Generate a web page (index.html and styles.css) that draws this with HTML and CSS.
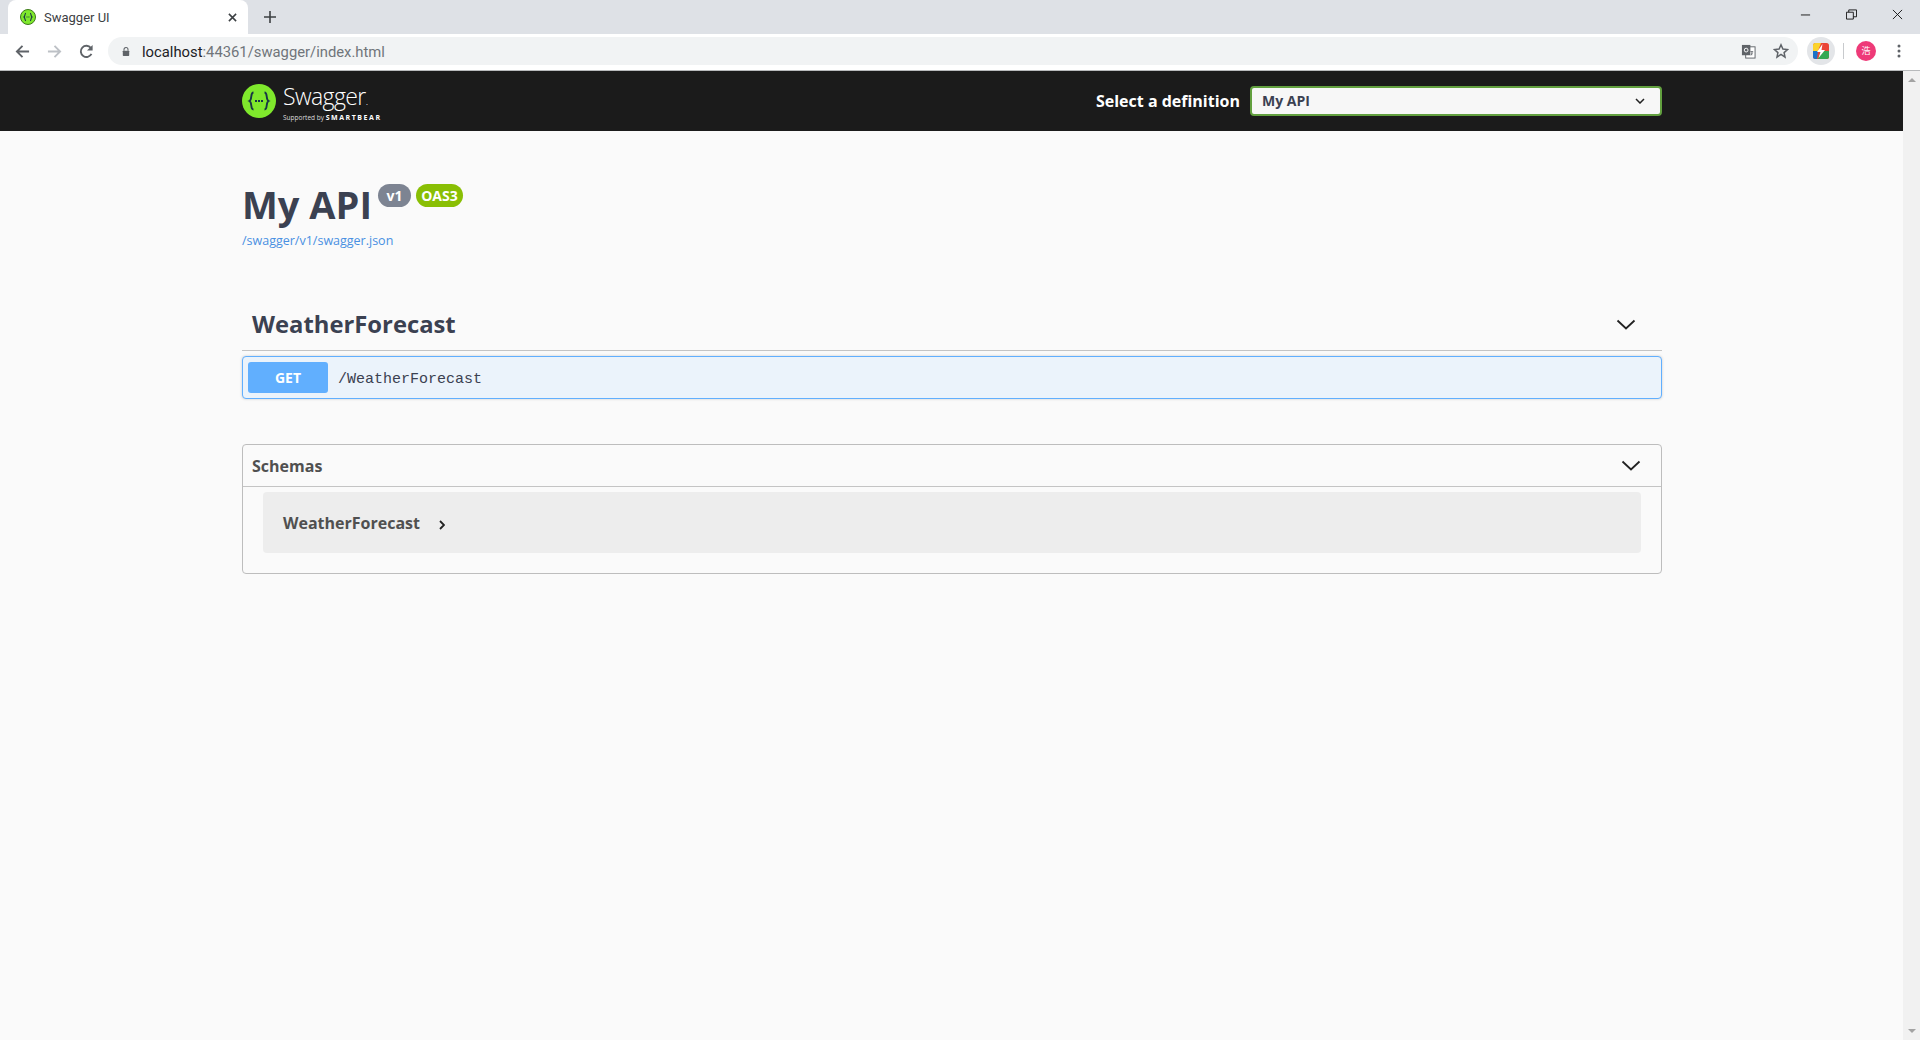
FILE: index.html
```html
<!DOCTYPE html>
<html lang="en">
<head>
<meta charset="utf-8">
<title>Swagger UI</title>
<link rel="stylesheet" href="styles.css">
</head>
<body>
<header class="chrome">
  <div class="tabstrip">
    <div class="tab">
      <svg class="favicon" viewBox="0 0 16 16"><circle cx="8" cy="8" r="7.5" fill="#7fe82c" stroke="#3d7a1a" stroke-width="1"/><path d="M6 4.2C4.6 4.2 5.2 7.4 4 8c1.2.6.6 3.8 2 3.8M10 4.2c1.4 0 .8 3.2 2 3.8-1.2.6-.6 3.8-2 3.8" fill="none" stroke="#173646" stroke-width="1.1"/><path d="M6.5 8h3" stroke="#173646" stroke-width="1" stroke-dasharray="1 .9"/></svg>
      <span class="tab-title">Swagger UI</span>
      <svg class="tab-close" viewBox="0 0 10 10"><path d="M1 1l8 8M9 1l-8 8" stroke="#3c4043" stroke-width="1.7"/></svg>
    </div>
    <svg class="newtab" viewBox="0 0 12 12"><path d="M6 0v12M0 6h12" stroke="#3c4043" stroke-width="1.6"/></svg>
    <div class="winctl">
      <svg viewBox="0 0 12 12"><path d="M1 6.5h10" stroke="#111" stroke-width="1"/></svg>
      <svg viewBox="0 0 12 12"><path d="M.5 3.5h7.5v7.5H.5zM3 3.5V1h8.500v7.500H8" fill="none" stroke="#111" stroke-width="1"/></svg>
      <svg viewBox="0 0 12 12"><path d="M1 1l10 10M11 1L1 11" stroke="#111" stroke-width="1"/></svg>
    </div>
  </div>
  <div class="toolbar">
    <div class="navs">
      <svg viewBox="0 0 16 16"><path d="M15 8H2.500M8 2L2 8l6 6" fill="none" stroke="#5f6368" stroke-width="2"/></svg>
      <svg viewBox="0 0 16 16"><path d="M1 8h12.500M8 2l6 6-6 6" fill="none" stroke="#bdc1c6" stroke-width="2"/></svg>
      <svg viewBox="0 0 16 16"><path d="M13.300 10.500A6 6 0 1 1 12.600 4.100" fill="none" stroke="#5f6368" stroke-width="2"/><path d="M14.500 1v6h-6z" fill="#5f6368"/></svg>
    </div>
    <div class="omnibox">
      <svg class="lock" viewBox="0 0 10 12"><path d="M2.500 5V3.500a2.500 2.500 0 0 1 5 0V5" fill="none" stroke="#5f6368" stroke-width="1.300"/><rect x="1" y="5" width="8" height="6.500" rx=".8" fill="#5f6368"/></svg>
      <span class="url"><span class="host">localhost</span>:44361/swagger/index.html</span>
      <svg class="translate" viewBox="0 0 16 16"><rect x="5" y="3" width="10" height="12" fill="#fff" stroke="#5f6368"/><rect x="1" y="1" width="9" height="11" fill="#5f6368"/><circle cx="5.500" cy="6.500" r="2" fill="none" stroke="#fff"/><path d="M10 8h3M11.500 8v4M10.500 12l2-3" stroke="#5f6368" stroke-width=".8" fill="none"/></svg>
      <svg class="star" viewBox="0 0 16 16"><path d="M8 1.800l1.900 4.200 4.600.5-3.400 3.100.9 4.500L8 11.400l-4 2.700.9-4.500L1.500 6.500l4.600-.5z" fill="none" stroke="#5f6368" stroke-width="1.500"/></svg>
    </div>
    <div class="ext">
      <svg viewBox="0 0 16 16"><rect width="16" height="16" rx="2.500" fill="#ea4335"/><path d="M0 8V2.500A2.500 2.500 0 0 1 2.500 0H8L5 8z" fill="#fbd32c"/><path d="M0 8h5l-1 8H2.500A2.500 2.500 0 0 1 0 13.500z" fill="#1a73c8"/><path d="M8 8h8v5.500a2.500 2.500 0 0 1-2.500 2.500H5z" fill="#34a853"/><path d="M9.500 1L4 9h3.500L5.500 15 12 7H8.500z" fill="#fff"/></svg>
    </div>
    <div class="sep"></div>
    <div class="avatar">浩</div>
    <svg class="menu" viewBox="0 0 4 14"><circle cx="2" cy="2" r="1.500" fill="#5f6368"/><circle cx="2" cy="7" r="1.500" fill="#5f6368"/><circle cx="2" cy="12" r="1.500" fill="#5f6368"/></svg>
  </div>
</header>

<div class="viewport">
  <div class="page">
    <div class="topbar">
      <div class="wrapper topbar-inner">
        <div class="logo">
          <svg class="logo-mark" viewBox="0 0 34 34"><circle cx="17" cy="17" r="17" fill="#7fe82c"/><path d="M11.500 8.500C8 8.500 10.500 15.500 7.500 17c3 1.500.5 8.500 4 8.500M22.500 8.500c3.500 0 1 7 4 8.500-3 1.500-.5 8.500-4 8.500" fill="none" stroke="#173646" stroke-width="1.900"/><path d="M13 17h8" stroke="#173646" stroke-width="2" stroke-dasharray="2 1"/></svg>
          <div class="logo-text">
            <span class="logo-name">Swagger<small>.</small></span>
            <span class="logo-sub">Supported by <b>SMARTBEAR</b></span>
          </div>
        </div>
        <div class="definition">
          <span class="definition-label">Select a definition</span>
          <div class="select">
            <span>My API</span>
            <svg viewBox="0 0 10 6"><path d="M1 1l4 4 4-4" fill="none" stroke="#222" stroke-width="1.500"/></svg>
          </div>
        </div>
      </div>
    </div>

    <main class="wrapper">
      <section class="info">
        <h1 class="title">My API<span class="badges"><span class="badge badge-version">v1</span><span class="badge badge-oas">OAS3</span></span></h1>
        <a class="spec-link" href="#">/swagger/v1/swagger.json</a>
      </section>

      <section class="tag">
        <div class="tag-head">
          <h3>WeatherForecast</h3>
          <svg class="chev" viewBox="0 0 20 11"><path d="M1.500 1.500L10 9.500l8.500-8" fill="none" stroke="#222" stroke-width="1.800"/></svg>
        </div>
        <div class="opblock">
          <span class="method">GET</span>
          <span class="path">/WeatherForecast</span>
        </div>
      </section>

      <section class="models">
        <div class="models-head">
          <h4>Schemas</h4>
          <svg class="chev" viewBox="0 0 20 11"><path d="M1.500 1.500L10 9.500l8.500-8" fill="none" stroke="#222" stroke-width="1.800"/></svg>
        </div>
        <div class="models-body">
          <div class="model">
            <span class="model-name">WeatherForecast</span>
            <svg class="model-arrow" viewBox="0 0 6 10"><path d="M1 1l4 4-4 4" fill="none" stroke="#222" stroke-width="1.800"/></svg>
          </div>
        </div>
      </section>
    </main>
  </div>
  <div class="scrollbar">
    <span class="sb-up"></span>
    <span class="sb-down"></span>
  </div>
</div>
</body>
</html>
```

FILE: styles.css
```css
* { box-sizing: border-box; }
html, body { margin: 0; height: 1040px; overflow: hidden; }
body { display: flex; flex-direction: column; background: #fafafa; font-family: "Open Sans", "Noto Sans", sans-serif; color: #3b4151; }
svg { display: block; flex: none; }

.chrome { flex: none; height: 71px; background: #fff; border-bottom: 1px solid #b8babc; }
.tabstrip { height: 34px; background: #dee1e6; display: flex; align-items: center; padding-left: 8px; }
.tab { width: 240px; height: 34px; background: #fff; border-radius: 8px 8px 0 0; display: flex; align-items: center; padding: 0 11px 0 12px; }
.favicon { width: 16px; height: 16px; }
.tab-title { margin-left: 8px; flex: 1; font: 13px Roboto, sans-serif; color: #3c4043; }
.tab-close { width: 9px; height: 9px; }
.newtab { width: 12px; height: 12px; margin-left: 16px; }
.winctl { margin-left: auto; margin-right: 17px; margin-top: -6px; display: flex; gap: 35px; }
.winctl svg { width: 11px; height: 11px; }

.toolbar { height: 36px; display: flex; align-items: center; padding: 0 0 2px 15px; }
.navs { display: flex; gap: 17px; width: 93px; }
.navs svg { width: 15px; height: 15px; }
.omnibox { width: 1690px; height: 28px; border-radius: 14px; background: #f1f3f4; display: flex; align-items: center; padding: 0 9px 0 14px; }
.lock { width: 8px; height: 11px; }
.url { margin-left: 12px; padding-top: 1px; flex: 1; font: 14.8px Roboto, sans-serif; color: #70757a; }
.host { color: #202124; }
.translate { width: 15px; height: 15px; margin-right: 17px; }
.star { width: 16px; height: 16px; }
.ext { width: 28px; height: 28px; margin-left: 9px; border-radius: 50%; background: #e3e5e8; display: flex; align-items: center; justify-content: center; }
.ext svg { width: 16px; height: 16px; }
.sep { width: 1px; height: 16px; background: #c8cacd; margin-left: 8px; }
.avatar { width: 20px; height: 20px; margin-left: 12px; border-radius: 50%; background: #ee3a78; color: #fff; font: 9px/20px "Noto Sans CJK SC", sans-serif; text-align: center; }
.menu { width: 4px; height: 14px; margin-left: 21px; }

.viewport { flex: 1; min-height: 0; display: flex; }
.page { flex: 1; min-width: 0; }
.wrapper { width: 1420px; margin-left: 242px; }

.topbar { height: 60px; background: #1b1b1b; }
.topbar-inner { height: 60px; display: flex; align-items: center; justify-content: space-between; }
.logo { display: flex; align-items: center; gap: 7px; }
.logo-mark { width: 34px; height: 34px; }
.logo-text { display: flex; flex-direction: column; color: #fff; padding-top: 2px; }
.logo-name { font-size: 23px; font-weight: 300; line-height: 26px; letter-spacing: -.6px; }
.logo-name small { font-size: 10px; }
.logo-sub { font-size: 6.5px; line-height: 8px; color: #ddd; }
.logo-sub b { font-size: 7px; letter-spacing: 1.55px; color: #fff; }
.definition { display: flex; align-items: center; gap: 10px; }
.definition-label { font-size: 16px; font-weight: 700; line-height: 24px; color: #fff; }
.select { width: 412px; height: 30px; border: 2px solid #62a03f; border-radius: 4px; background: #f7f7f7; display: flex; align-items: center; justify-content: space-between; padding: 0 15px 2px 10px; font-size: 14px; font-weight: 700; color: #3b4151; }
.select svg { width: 10px; height: 6px; margin-top: 2px; }

.info { padding-top: 49px; height: 164px; }
.title { margin: 0; display: flex; align-items: flex-start; font-size: 38px; font-weight: 700; line-height: 48px; }
.badges { display: flex; gap: 5px; margin: 4px 0 0 6px; }
.badge { height: 23px; border-radius: 12px; padding: 0 5px; font-size: 14px; font-weight: 700; line-height: 23px; color: #fff; }
.badge-version { width: 33px; text-align: center; background: #7d8492; }
.badge-oas { width: 47px; text-align: center; background: #89bf04; padding: 0; }
.spec-link { display: block; margin-top: 5px; font-size: 12.5px; line-height: 16px; color: #4990e2; text-decoration: none; }

.tag-head { height: 56px; border-bottom: 1px solid #c4c4c4; display: flex; align-items: center; justify-content: space-between; padding: 3px 26px 0 10px; }
.tag-head h3 { margin: 0; font-size: 23.8px; font-weight: 700; line-height: 32px; }
.chev { width: 20px; height: 11px; }
.opblock { height: 43px; margin-top: 5px; border: 1px solid #61affe; border-radius: 4px; background: #ebf3fb; display: flex; align-items: center; padding-left: 5px; box-shadow: 0 0 3px rgba(0,0,0,.19); }
.method { width: 80px; height: 31px; border-radius: 3px; background: #61affe; color: #fff; font-size: 14px; font-weight: 700; line-height: 31px; text-align: center; }
.path { margin-left: 10px; padding-top: 3px; font: 15px "Liberation Mono", monospace; color: #3b4151; }

.models { margin-top: 45px; height: 130px; border: 1px solid #bdbdbd; border-radius: 4px; }
.models-head { height: 42px; border-bottom: 1px solid #c4c4c4; display: flex; align-items: center; justify-content: space-between; padding: 0 20px 0 9px; }
.models-head h4 { margin: 0; font-size: 16px; font-weight: 700; line-height: 24px; color: #505050; }
.models-body { padding: 5px 20px; }
.model { height: 61px; border-radius: 4px; background: #ededed; display: flex; align-items: center; padding: 0 20px; }
.model-name { font-size: 16px; font-weight: 700; line-height: 24px; color: #505050; }
.model-arrow { width: 6px; height: 10px; margin: 4px 0 0 19px; }

.scrollbar { width: 17px; flex: none; background: #f1f1f1; display: flex; flex-direction: column; justify-content: space-between; align-items: center; padding: 7px 0; }
.sb-up { border: 4px solid transparent; border-top: 0; border-bottom: 4px solid #a3a3a3; }
.sb-down { border: 4px solid transparent; border-bottom: 0; border-top: 4px solid #a3a3a3; }
```
